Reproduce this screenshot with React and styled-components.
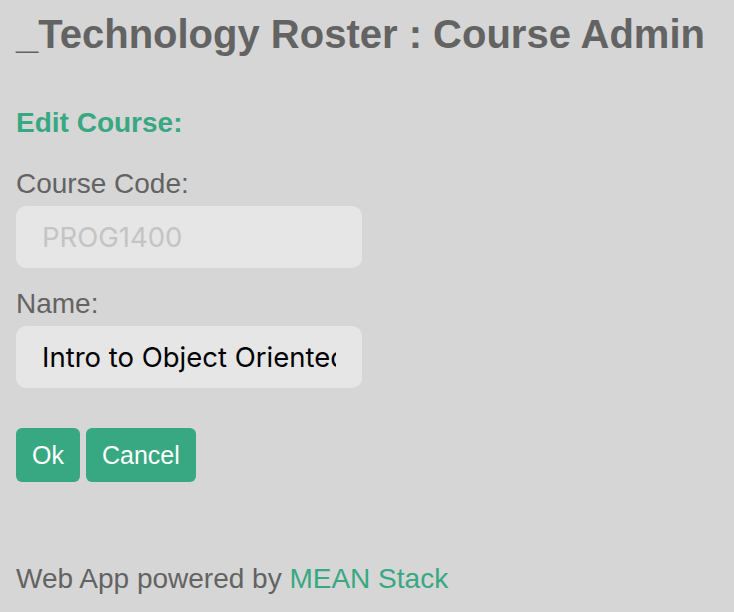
import React from "react";
import styled, { createGlobalStyle } from "styled-components";

const Global = createGlobalStyle`
  html, body { margin: 0; padding: 0; background: #d6d6d6; }
  body { font-family: "Liberation Sans", Arial, sans-serif; color: #636363; }
`;

const Page = styled.div`
  padding: 0 16px;
  min-height: 612px;
  box-sizing: border-box;
  display: flex;
  flex-direction: column;
`;

const Title = styled.h1`
  margin: 0;
  padding-top: 12px;
  font-size: 40px;
  line-height: 44px;
  font-weight: bold;
  color: #636363;
  white-space: nowrap;
`;

const Heading = styled.h2`
  margin: 51px 0 0;
  font-size: 28px;
  line-height: 32px;
  font-weight: bold;
  color: #38a882;
`;

const Form = styled.form`
  display: flex;
  flex-direction: column;
  margin-top: 29px;
`;

const Label = styled.label`
  font-size: 28px;
  line-height: 32px;
  color: #636363;
  margin-bottom: 6px;
`;

const Input = styled.input`
  box-sizing: border-box;
  width: 346px;
  height: 62px;
  border: none;
  border-radius: 10px;
  background: #e6e6e6;
  padding: 0 26px;
  font-family: Inter, "Liberation Sans", Arial, sans-serif;
  font-size: 27.5px;
  color: ${(p) => (p.disabled ? "#c4c4c4" : "#000")};
  outline: none;
  margin-bottom: ${(p) => p.$mb || 0}px;
  &:disabled { -webkit-text-fill-color: #c4c4c4; opacity: 1; }
`;

const Actions = styled.div`
  display: flex;
  gap: 6px;
  margin-top: 40px;
`;

const Button = styled.button`
  height: 54px;
  padding: 0 ${(p) => p.$px}px;
  border: none;
  border-radius: 6px;
  background: #38a882;
  color: #fff;
  font-family: "Liberation Sans", Arial, sans-serif;
  font-size: 25px;
  cursor: pointer;
`;

const Footer = styled.p`
  margin: 81px 0 0;
  font-size: 28px;
  line-height: 32px;
  color: #636363;
`;

const Link = styled.a`
  color: #38a882;
  text-decoration: none;
`;

export default function App() {
  return (
    <>
      <Global />
      <Page>
        <Title>_Technology Roster : Course Admin</Title>
        <Heading>Edit Course:</Heading>
        <Form onSubmit={(e) => e.preventDefault()}>
          <Label htmlFor="code">Course Code:</Label>
          <Input id="code" value="PROG1400" disabled readOnly $mb={20} />
          <Label htmlFor="name">Name:</Label>
          <Input id="name" defaultValue="Intro to Object Oriented Programming" />
          <Actions>
            <Button type="submit" $px={16}>Ok</Button>
            <Button type="button" $px={16}>Cancel</Button>
          </Actions>
        </Form>
        <Footer>
          Web App powered by <Link href="#">MEAN Stack</Link>
        </Footer>
      </Page>
    </>
  );
}
